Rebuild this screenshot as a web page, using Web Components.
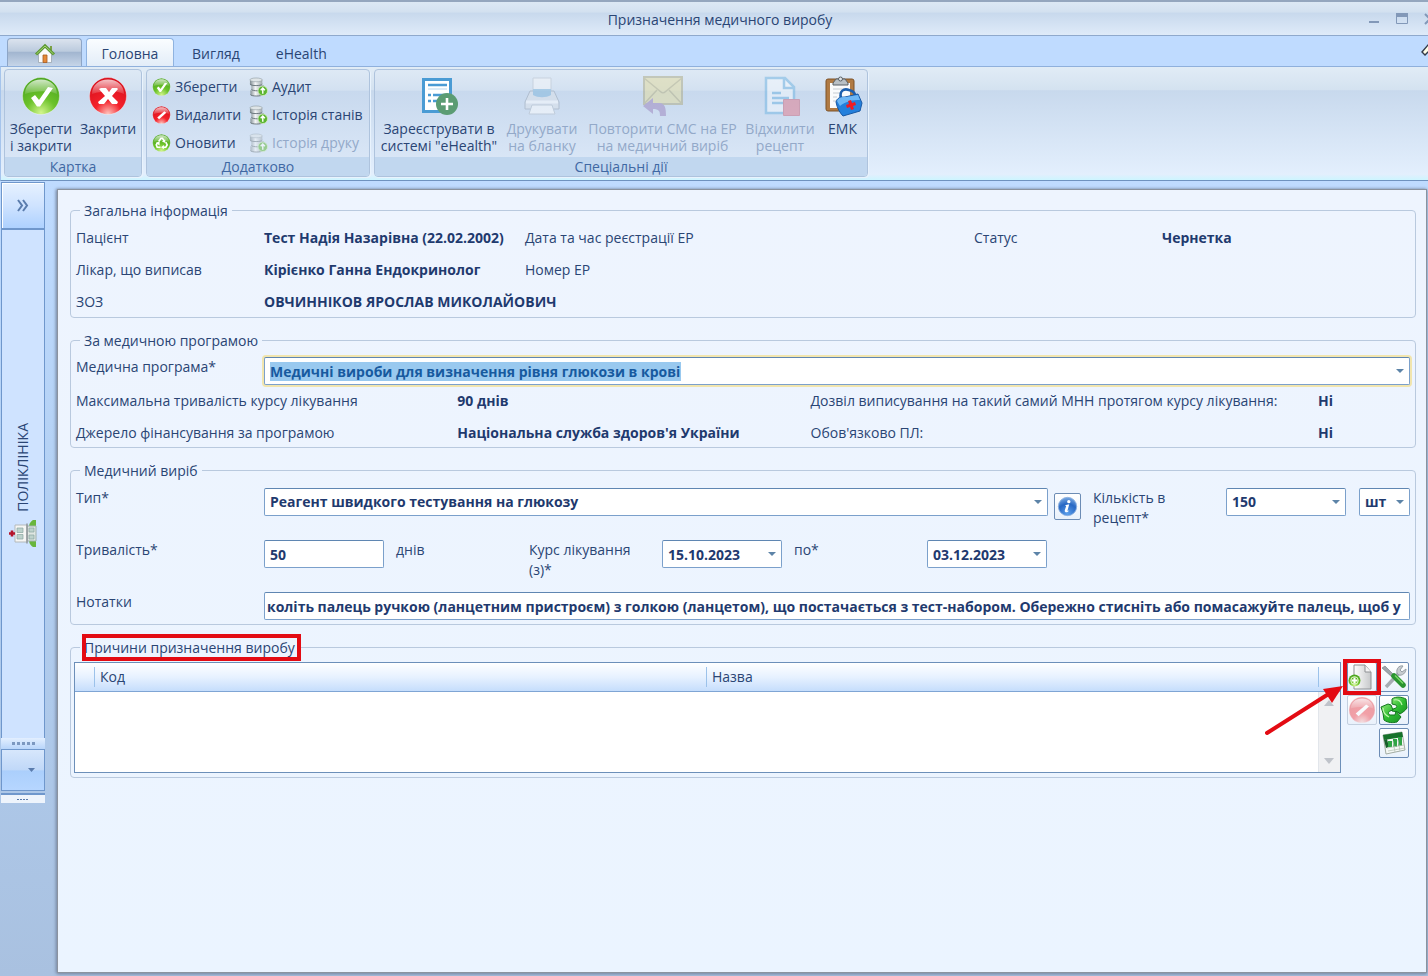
<!DOCTYPE html>
<html lang="uk">
<head>
<meta charset="utf-8">
<title>Призначення медичного виробу</title>
<style>
  html, body {
    margin: 0;
    height: 100%;
  }

  body {
    font-family: "Open Sans", "Noto Sans", sans-serif;
    font-size: 14px;
    line-height: 20px;
    color: #2a4574;
    --ink-strong: #1f3a6e;
    --line: #b9c9de;
    --field-line: #7ba0cb;
  }
</style>
</head>
<body>
<prescription-app></prescription-app>

<script>
const define = (name, html, setup) => {
  const template = document.createElement("template");
  template.innerHTML = html;

  customElements.define(name, class extends HTMLElement {
    connectedCallback() {
      if (this.shadowRoot) return;
      this.attachShadow({ mode: "open" });
      this.shadowRoot.appendChild(template.content.cloneNode(true));
      if (setup) setup(this, this.shadowRoot);
    }
  });
};

/* ---------- Icons ---------- */

const GREEN = `<radialGradient id="g" cx=".5" cy=".95" r=".9"><stop offset="0" stop-color="#d2f58c"/><stop offset=".45" stop-color="#6cc22a"/><stop offset="1" stop-color="#4aa51e"/></radialGradient>`;
const RED = `<radialGradient id="g" cx=".5" cy=".98" r=".9"><stop offset="0" stop-color="#ffc3bb"/><stop offset=".4" stop-color="#f4222b"/><stop offset="1" stop-color="#d80f1c"/></radialGradient>`;
const ball = (defs) => `<defs>${defs}<linearGradient id="s" x2="0" y2="1"><stop offset="0" stop-color="#fff" stop-opacity=".75"/><stop offset="1" stop-color="#fff" stop-opacity=".12"/></linearGradient></defs>
  <circle cx="20" cy="20" r="18.500" fill="url(#g)" stroke="#fff" stroke-opacity=".35"/>
  <path d="M4 18C4 9 11 3.500 20 3.500S36 9 36 18c-9-4-22-3-32 0z" fill="url(#s)"/>`;
const DATABASE = `<defs><linearGradient id="m"><stop offset="0" stop-color="#7c898f"/><stop offset=".4" stop-color="#f4f6f7"/><stop offset="1" stop-color="#8d999f"/></linearGradient></defs>
  <path d="M1 2.500v4c0 3 13 3 13 0v-4zM2.500 8v4c0 3 13 3 13 0V8zM1.500 13.500v4c0 3 13 3 13 0v-4z" fill="url(#m)"/>
  <ellipse cx="7.500" cy="2.500" rx="6.500" ry="2" fill="#dfe5e7" stroke="#8b979c" stroke-width=".6"/>
  <path d="M1 7c1 2 12 2 13 0M2.500 12.500c1 2 12 2 13 0M1.500 18c1 2 12 2 13 0" fill="none" stroke="#5c686e" stroke-width=".9"/>
  <circle cx="14.500" cy="14" r="5" fill="#5cb531" stroke="#d8f2c5" stroke-width=".8"/>
  <path d="M14.500 17v-5.500M12.300 13.500l2.200-2.400 2.200 2.400" fill="none" stroke="#fff" stroke-width="1.500"/>`;

const icons = {
  home: ["0 0 20 20", `<path d="M15 2h2v5h-2z" fill="#7aa046"/><path d="M3.500 10v8.500h13V10L10 3z" fill="#fafbfc" stroke="#9aa6b0" stroke-width=".8"/><path d="M8 11h4v7.500H8z" fill="#e58a3a" stroke="#a65a22" stroke-width=".8"/><path d="M1 10.500L10 1.800l9 8.700" fill="none" stroke="#5b9732" stroke-width="3"/><path d="M1.500 10L10 2l8.500 8" fill="none" stroke="#a6d572"/>`],
  ok: ["0 0 40 40", ball(GREEN) + `<path d="M10 22l4-3 4 5L27 11l5 1-13 18.500h-3z" fill="#fff"/>`],
  close: ["0 0 40 40", ball(RED) + `<path d="M11 13l2-1h5l3 4 3-4h5l1 1-6 7 6 6-1 2h-5l-4-5-4 5h-5l-1-2 7-6z" fill="#fff"/>`],
  forbid: ["0 0 40 40", ball(RED) + `<path d="M11 25L26 12l4 3-15 14z" fill="#fff"/>`],
  refresh: ["0 0 40 40", ball(GREEN) + `<g fill="none" stroke="#fff" stroke-width="3.500"><path d="M14 17l5-7h3l4 6M29 18l3 6-3 5h-6M18 29h-7l-2-5 3-5"/></g><path d="M28 12v8l-7-3zM25 24v9l-6-4zM8 20l8-3v8z" fill="#fff"/>`],
  database: ["0 0 20 20", DATABASE],
  register: ["0 0 40 40", `<path d="M4.500 3.500h27v32h-27z" fill="#fff" stroke="#4a9bd4" stroke-width="3"/><g stroke="#4a9bd4" stroke-width="2.500"><path d="M9 9h19M14 19h13M14 25h7"/><path d="M9 19h3M9 25h3"/></g><path d="M9 13h19" stroke="#b8d8ef" stroke-width="1"/><circle cx="28" cy="28" r="11" fill="#5b9c73"/><path d="M28 22v12M22 28h12" stroke="#fff" stroke-width="2.600"/>`],
  printer: ["0 0 40 40", `<path d="M11 2h18v17H11z" fill="#f5f7fa" stroke="#b9c2cc"/><path d="M8 15h24l5 11v7H3v-7z" fill="#dde2e9" stroke="#98a4b2"/><path d="M11 13h18v6c-5 3-13 3-18 0z" fill="#7fb6dc"/><path d="M4 26h32" stroke="#fff" stroke-width="3"/><path d="M10 29h20l3 9H7z" fill="#fff" stroke="#b3bdc8"/>`],
  mail: ["0 0 40 40", `<path d="M1 1h38v27H1z" fill="#e4dc9c" stroke="#aca982" stroke-width="2"/><path d="M1 2l17 14c1 1 3 1 4 0L39 2M1 28l13-14M39 28L26 14" fill="none" stroke="#b5ae78" stroke-width="1.500"/><path d="M0 30l10-8v5h6c6 0 7 5 7 13h-6c0-5-1-7-7-7v5z" fill="#9b83bd"/>`],
  reject: ["0 0 40 40", `<path d="M6 2h19l9 9v26H6z" fill="#f7fbff" stroke="#6fb4e2" stroke-width="2.500"/><path d="M24 2v10h10" fill="none" stroke="#6fb4e2" stroke-width="2.500"/><path d="M12 17h9M12 22h17M12 27h11" stroke="#6fb4e2" stroke-width="2.500"/><path d="M23.500 23.500h16v16h-16z" fill="#e0788b" stroke="#c96379"/>`],
  clipboard: ["0 0 40 40", `<rect x="3" y="3" width="28" height="32" rx="2" fill="#b07a43" stroke="#7d5228"/><path d="M7 7h20v25H7z" fill="#fafbfc"/><path d="M10 7l3-4h9l3 4v2H10z" fill="#b9c0c5" stroke="#596066"/><circle cx="17.500" cy="3" r="2" fill="#dfe3e6" stroke="#596066"/><path d="M10 13h14M10 17h8M10 21h4M10 25h3" stroke="#c6ccd2"/><path d="M18 22c-2-7 3-10 8-8 5 1 7 5 7 9" fill="none" stroke="#1c5fae" stroke-width="2.600"/><path d="M13 26c1-4 4-5 9-5l13-3 4 9-2 8-17 5c-3-3-6-8-7-14z" fill="#2480dc" stroke="#1858a4"/><path d="M14 25c2-4 5-4 9-4l12-2 2 5c-7 0-14 1-20 6z" fill="#6cb6f5"/><path d="M25 25l3-1 1 3 3-1 1 3-3 1 1 3-3 1-1-3-3 1-1-3 3-1z" fill="#ed1c24"/>`],
  hospital: ["0 0 28 28", `<path d="M27 0v27h-3c-3-2-5-5-3-9h2V9h-2c-2-4 0-7 3-9z" fill="#69b63d"/><path d="M18 6h9v15h-9z" fill="#dfe6e2" stroke="#9fb0ab"/><path d="M6 5h12v17H6z" fill="#f6f6f4" stroke="#b4b9ba"/><path d="M18 3.500v20" stroke="#8f969a" stroke-width="1.500"/><path d="M8 8h6v4.500H8zM8 14.500h6V19H8zM20 8h5v4h-5zM20 15h5v4h-5z" fill="#bdd2cc" stroke="#8aa8a1" stroke-width=".7"/><path d="M0 13.500h6M3 10.500v6" stroke="#b4142a" stroke-width="2.600"/>`],
  add: ["0 0 28 28", `<defs>${GREEN}<linearGradient id="p"><stop offset="0" stop-color="#fff"/><stop offset="1" stop-color="#c6c8ca"/></linearGradient></defs><path d="M6 2h11l6 7v17H6z" fill="url(#p)" stroke="#8e9194"/><path d="M17 2v7h6" fill="#f4f4f4" stroke="#8e9194"/><circle cx="6.500" cy="17.500" r="6" fill="url(#g)"/><circle cx="6.500" cy="17.500" r="3.800" fill="none" stroke="#e5f8cf"/><path d="M6.500 14.500v6M3.500 17.500h6" stroke="#fff" stroke-width="2"/>`],
  tools: ["0 0 28 28", `<path d="M6 24L20 9" stroke="#a6acb2" stroke-width="3.500"/><path d="M17 10c-1-4 2-8 6-7l-3 4 2 2 4-3c0 4-4 7-7 6z" fill="#c7ccd0" stroke="#969ea4"/><path d="M2 5l3-2 9 9-2 2z" fill="#9fa6ab" stroke="#737b80" stroke-width=".6"/><path d="M14 13l9 9" stroke="#2a9430" stroke-width="5.500" stroke-linecap="round"/><path d="M15 12.500l8 8" stroke="#7bd868" stroke-width="1.500"/>`],
  sync: ["0 0 28 28", `<defs><linearGradient id="a" x2="1" y2="1"><stop offset="0" stop-color="#8be672"/><stop offset=".5" stop-color="#2fbd32"/><stop offset="1" stop-color="#1b9427"/></linearGradient></defs>
    <path d="M12 3c4-3 10-2 14 0l1 9c-2 3-4 4-7 6l-2-2-6-1 1-2 3-1c1-1 1-2 0-3l-4-1z" fill="url(#a)" stroke="#14771e"/>
    <path d="M1 11l7-3 3 1 2 5-3 1c-2 1-2 3 0 4l5 0 1-4 5 6-4 5c-4 1-9 1-13-2l-1-7z" fill="url(#a)" stroke="#14771e"/>
    <path d="M14 4c4-1 7 1 8 5M3 12c0 4 2 7 6 9" fill="none" stroke="#c1f6b0" stroke-width="1.200"/>`],
  sheet: ["0 0 28 28", `<path d="M3 6l19-3 3 18-19 4z" fill="#f5f8f5" stroke="#a3ada4"/><path d="M3 6l19-3 1 5-19 3z" fill="#17722b"/><path d="M4 11l3-1 2 8-3 1z" fill="#175f29"/><path d="M8 12h4v6H8zM13 10h4v8h-4zM18 8h4v9h-4z" fill="#2fa544"/><path d="M7 19l17-3M8 22l17-3M13 12l2 11M18 11l2 11" stroke="#b7c4b8" stroke-width=".8"/>`],
  info: ["0 0 24 24", `<defs><radialGradient id="g" cx=".5" cy=".9" r=".9"><stop offset="0" stop-color="#5ca0ec"/><stop offset=".6" stop-color="#2767c4"/><stop offset="1" stop-color="#79a9e2"/></radialGradient></defs><circle cx="12" cy="12" r="10.500" fill="url(#g)" stroke="#8bb0e0"/><circle cx="13.500" cy="6.500" r="1.900" fill="#fff"/><path d="M9 10.500l5-1-2 7c0 1 1 .5 2-.5-1 3-6 4-5 0l1.500-4.500z" fill="#fff"/>`],
  hint: ["0 0 20 20", `<path d="M2 9l6-7 6 7-3 3-3-3-3 3z" fill="#fffde6" stroke="#333a48" stroke-width="1.400"/>`]
};

define("ui-icon", `
  <style>
    :host { display: block; width: 20px; height: 20px; flex: none; }
    svg { display: block; width: 100%; height: 100%; overflow: visible; }
  </style>
`, (host, root) => {
  const [box, body] = icons[host.getAttribute("name")];
  root.innerHTML += `<svg viewBox="${box}" aria-hidden="true">${body}</svg>`;
});

/* ---------- Window title ---------- */

define("title-bar", `
  <style>
    :host {
      display: grid;
      grid-template-columns: 1fr auto 1fr;
      align-items: center;
      height: 36px;
      box-sizing: border-box;
      overflow: hidden;
      border-top: 2px solid #94a6be;
      border-bottom: 1px solid #8fa9cc;
      background: linear-gradient(#dce8f4, #d3e1f0 30%, #c8d9ed 34%, #dfebf9);
    }
    h1 { margin: 2px 0 0 12px; font-size: 14px; font-weight: 400; grid-column: 2; }
    div { display: flex; justify-content: flex-end; gap: 16px; margin-right: -8px; }
    button { border: 0; padding: 0; background: none; width: 12px; height: 12px; color: #8298b8; }
    svg { display: block; }
  </style>
  <h1><slot></slot></h1>
  <div>
    <button aria-label="Згорнути"><svg width="12" height="12"><path d="M1 9h10" stroke="currentColor" stroke-width="2"/></svg></button>
    <button aria-label="Розгорнути"><svg width="12" height="12"><path d="M.5 1v9.500h11V1" fill="none" stroke="currentColor"/><path d="M0 0h12v4H0z" fill="currentColor"/></svg></button>
    <button aria-label="Закрити вікно"><svg width="12" height="12"><path d="M1 1l10 10M11 1L1 11" stroke="currentColor" stroke-width="2"/></svg></button>
  </div>
`);

/* ---------- Ribbon ---------- */

define("ribbon-tabs", `
  <style>
    :host {
      display: flex;
      align-items: flex-end;
      height: 30px;
      padding: 0 0 0 7px;
      overflow: hidden;
      background: #bfdbff;
    }
    button { font: inherit; color: inherit; border: 0; background: none; padding: 2px 0 0; height: 28px; box-sizing: border-box; }
    .home {
      width: 75px;
      display: flex;
      justify-content: center;
      align-items: center;
      border: 1px solid #8da5c6;
      border-bottom: 0;
      border-radius: 4px 4px 0 0;
      background: linear-gradient(#dbe3ee, #bccbde 45%, #a2b6d0 50%, #c6d5e8);
    }
    .active {
      width: 88px;
      margin-left: 4px;
      border: 1px solid #8fb3e0;
      border-bottom: 0;
      border-radius: 4px 4px 0 0;
      background: linear-gradient(#fafdff, #e3edf8);
    }
    .plain { padding: 3px 18px 0; }
    .hint { margin: 0 -12px 0 auto; width: 20px; }
  </style>
  <button class="home" aria-label="Домашня"><ui-icon name="home"></ui-icon></button>
  <button class="active">Головна</button>
  <button class="plain">Вигляд</button>
  <button class="plain">eHealth</button>
  <button class="hint" aria-label="Згорнути стрічку"><ui-icon name="hint"></ui-icon></button>
`);

define("ribbon-group", `
  <style>
    :host {
      display: flex;
      flex-direction: column;
      box-sizing: border-box;
      border: 1px solid #aec3dd;
      border-radius: 4px;
      overflow: hidden;
      background: linear-gradient(#dee9f5, #d3e1f1 19%, #c8d9ee 20%, #dde9f8);
      box-shadow: 1px 1px 0 #e9f3fd;
    }
    .items { flex: 1; display: flex; padding: 6px 5px 0; }
    footer {
      height: 19px;
      line-height: 19px;
      text-align: center;
      color: #3f68a3;
      background: #c1d7ef;
    }
  </style>
  <div class="items"><slot></slot></div>
  <footer></footer>
`, (host, root) => {
  root.querySelector("footer").textContent = host.getAttribute("label");
});

define("ribbon-button", `
  <style>
    :host { display: block; flex: none; }
    button {
      font: inherit;
      color: inherit;
      border: 0;
      padding: 0;
      background: none;
      display: flex;
      flex-direction: column;
      align-items: center;
      width: 100%;
      gap: 4px;
      line-height: 17px;
      white-space: nowrap;
    }
    ui-icon { width: 40px; height: 40px; }
    :host([small]) button { flex-direction: row; line-height: 20px; }
    :host([small]) ui-icon { width: 19px; height: 20px; }
    button:disabled { color: #93a9c9; }
    button:disabled ui-icon { opacity: .5; }
  </style>
  <button><span><slot></slot></span></button>
`, (host, root) => {
  const button = root.querySelector("button");
  const icon = document.createElement("ui-icon");
  icon.setAttribute("name", host.getAttribute("icon"));
  button.prepend(icon);
  button.disabled = host.hasAttribute("disabled");
});

define("main-ribbon", `
  <style>
    :host {
      display: flex;
      gap: 4px;
      height: 115px;
      box-sizing: border-box;
      padding: 2px 3px 3px;
      border-top: 1px solid #8fb0dc;
      border-bottom: 1px solid #6f92bf;
      border-left: 1px solid #a5c4ec;
      background: linear-gradient(#e1ecf6, #d4e2f0 20%, #c8d9ed 21%, #e3effd 95%, #cdf5ff);
    }
    .card { width: 138px; }
    .extra { width: 224px; }
    .special { width: 494px; }
    .stack { display: flex; flex-direction: column; gap: 8px; padding-top: 1px; }
    .save { width: 62px; }
    .quit { width: 72px; }
    .c1 { width: 97px; }
    .a { width: 118px; }
    .b { width: 88px; }
    .c { width: 153px; }
    .d { width: 82px; }
    .e { width: 43px; }
  </style>
  <ribbon-group class="card" label="Картка">
    <ribbon-button class="save" icon="ok">Зберегти<br>і закрити</ribbon-button>
    <ribbon-button class="quit" icon="close">Закрити</ribbon-button>
  </ribbon-group>
  <ribbon-group class="extra" label="Додатково">
    <div class="stack c1">
      <ribbon-button small icon="ok">Зберегти</ribbon-button>
      <ribbon-button small icon="forbid">Видалити</ribbon-button>
      <ribbon-button small icon="refresh">Оновити</ribbon-button>
    </div>
    <div class="stack">
      <ribbon-button small icon="database">Аудит</ribbon-button>
      <ribbon-button small icon="database">Історія станів</ribbon-button>
      <ribbon-button small icon="database" disabled>Історія друку</ribbon-button>
    </div>
  </ribbon-group>
  <ribbon-group class="special" label="Спеціальні дії">
    <ribbon-button class="a" icon="register">Зареєструвати в<br>системі "eHealth"</ribbon-button>
    <ribbon-button class="b" icon="printer" disabled>Друкувати<br>на бланку</ribbon-button>
    <ribbon-button class="c" icon="mail" disabled>Повторити СМС на ЕР<br>на медичний виріб</ribbon-button>
    <ribbon-button class="d" icon="reject" disabled>Відхилити<br>рецепт</ribbon-button>
    <ribbon-button class="e" icon="clipboard">ЕМК</ribbon-button>
  </ribbon-group>
`);

/* ---------- Collapsed navigation pane ---------- */

define("side-pane", `
  <style>
    :host { display: flex; flex-direction: column; width: 44px; margin-left: 1px; flex: none; }
    button { font: inherit; color: #5a7cad; border: 1px solid #6f97cc; padding: 0; }
    .expand {
      height: 48px;
      display: grid;
      place-items: center;
      box-shadow: inset 1px 1px 0 #fff;
      border-bottom-width: 2px;
      background: linear-gradient(#e6f1ff, #cfe3ff 50%, #add1ff);
    }
    .body {
      height: 508px;
      display: flex;
      flex-direction: column;
      align-items: center;
      justify-content: flex-end;
      gap: 8px;
      box-sizing: border-box;
      padding-bottom: 190px;
      border: solid #6f97cc;
      border-width: 0 1px;
      background: #cfe3ff;
    }
    .name { writing-mode: vertical-rl; transform: rotate(180deg); }
    .body ui-icon { width: 28px; height: 28px; }
    .grip {
      height: 11px;
      display: grid;
      place-items: center;
      background: linear-gradient(#e3efff, #b8d5fa);
    }
    .more {
      height: 42px;
      display: flex;
      align-items: center;
      justify-content: flex-end;
      padding-right: 9px;
      background: linear-gradient(#d7e7fc, #c0d8f8 50%, #abcffc 52%, #b6d6ff);
    }
    .foot {
      height: 8px;
      margin-top: 2px;
      border-top: 2px solid #6f97cc;
      display: grid;
      place-items: center;
      background: #eef4fc;
    }
    svg { display: block; }
  </style>
  <button class="expand" aria-label="Розгорнути панель"><svg width="12" height="13"><path d="M1 1l4 5.500L1 12M6 1l4 5.500L6 12" fill="none" stroke="currentColor" stroke-width="2"/></svg></button>
  <div class="body"><span class="name">ПОЛІКЛІНІКА</span><ui-icon name="hospital"></ui-icon></div>
  <div class="grip"><svg width="24" height="3"><path d="M1 1.500h23" stroke="#7c98c0" stroke-width="3" stroke-dasharray="3 2"/></svg></div>
  <button class="more" aria-label="Інші розділи"><svg width="7" height="4"><path d="M0 0h7L3.500 4z" fill="#5a7cad"/></svg></button>
  <div class="foot"><svg width="12" height="1"><path d="M0 .5h12" stroke="#5a7cad" stroke-dasharray="2 1"/></svg></div>
`);

/* ---------- Form parts ---------- */

define("form-group", `
  <style>
    :host { display: block; }
    fieldset {
      margin: 0;
      min-width: 0;
      padding: 0 5px 4px;
      border: 1px solid var(--line);
      border-radius: 4px;
    }
    legend { padding: 0 4px; margin-left: 4px; height: 20px; line-height: 22px; position: relative; }
    :host([marked]) legend::after {
      content: "";
      position: absolute;
      inset: -3px -2px -4px 2px;
      border: 4px solid #e30b13;
    }
  </style>
  <fieldset><legend></legend><slot></slot></fieldset>
`, (host, root) => {
  root.querySelector("legend").textContent = host.getAttribute("label");
});

/* Label with a text box or a drop-down next to it */
define("form-field", `
  <style>
    :host { display: flex; align-items: flex-start; --label: 188px; }
    :host([second]) { --label: 133px; }
    label { width: var(--label); flex: none; }
    label span { display: block; }
    :host([second]) label span { width: 120px; }
    .box {
      flex: 1;
      min-width: 0;
      height: 28px;
      box-sizing: border-box;
      display: flex;
      align-items: center;
      border: 1px solid var(--field-line);
      border-top-color: #5f86b2;
      border-radius: 2px;
      background: #fff;
    }
    input, select {
      flex: 1;
      min-width: 0;
      appearance: none;
      border: 0;
      outline: 0;
      margin: 0;
      padding: 0 0 0 5px;
      background: none;
      font: inherit;
      font-weight: 700;
      color: var(--ink-strong);
      height: 22px;
    }
    :host([tight]) input { padding: 0 0 0 2px; }
    svg { flex: none; margin-right: 5px; pointer-events: none; }
    :host([current]) .box { box-shadow: 0 0 0 2px #f1e5ae; }
    :host([current]) select {
      flex: none;
      margin: 1px auto 0 5px;
      padding: 0;
      height: 19px;
      line-height: 19px;
      background: #99c9ef;
      color: #175a9f;
    }
  </style>
  <label for="control"><span></span></label>
  <div class="box"></div>
`, (host, root) => {
  const label = host.getAttribute("label");
  const value = host.getAttribute("value");
  const control = document.createElement(host.hasAttribute("list") ? "select" : "input");

  if (label) root.querySelector("label span").textContent = label;
  else {
    root.querySelector("label").remove();
    control.setAttribute("aria-label", host.getAttribute("hint"));
  }

  control.id = "control";
  if (control.tagName === "SELECT") control.add(new Option(value));
  else control.value = value;

  const box = root.querySelector(".box");
  box.append(control);
  if (host.hasAttribute("list") || host.hasAttribute("date")) {
    box.insertAdjacentHTML("beforeend", `<svg width="8" height="4"><path d="M0 0h8L4 4z" fill="#5d84a8"/></svg>`);
  }
});

define("tool-button", `
  <style>
    :host { display: block; }
    button {
      display: grid;
      place-items: center;
      width: 30px;
      height: 30px;
      padding: 0;
      border: 1px solid #6c8cb5;
      border-radius: 2px;
      background: linear-gradient(#fff, #e9f1fb);
    }
    ui-icon { width: 28px; height: 28px; }
    :host([compact]) button { width: 27px; height: 27px; }
    :host([compact]) ui-icon { width: 21px; height: 21px; }
    button:disabled { border-color: #c3cfdf; }
    button:disabled ui-icon { opacity: .4; }
  </style>
  <button></button>
`, (host, root) => {
  const button = root.querySelector("button");
  button.innerHTML = `<ui-icon name="${host.getAttribute("icon")}"></ui-icon>`;
  button.setAttribute("aria-label", host.getAttribute("label"));
  button.disabled = host.hasAttribute("disabled");
});

define("reason-grid", `
  <style>
    :host {
      display: flex;
      flex-direction: column;
      height: 111px;
      box-sizing: border-box;
      border: 1px solid #6c8fb9;
      background: #fff;
    }
    table { width: 100%; table-layout: fixed; border-collapse: collapse; }
    tr { background: linear-gradient(#fff, #e6f1ff 50%, #c3dcfc); }
    th { height: 28px; padding: 0 6px; text-align: left; font-weight: 400; border-bottom: 1px solid #7fa5d4; }
    th + th { background: linear-gradient(#9cc2ea, #9cc2ea) 0 4px / 1px 20px no-repeat; }
    th:first-child { width: 7px; }
    th:last-child { width: 10px; }
    .body { flex: 1; display: flex; justify-content: flex-end; }
    .scroll {
      width: 22px;
      display: flex;
      flex-direction: column;
      justify-content: space-between;
      align-items: center;
      box-sizing: border-box;
      padding: 8px 1px 8px 0;
      background: #f0f1f3;
      border-left: 1px solid #e2e6eb;
    }
  </style>
  <table>
    <thead><tr><th></th><th>Код</th><th>Назва</th><th></th></tr></thead>
  </table>
  <div class="body">
    <div class="scroll">
      <svg width="10" height="6"><path d="M0 6h10L5 0z" fill="#bfc3ca"/></svg>
      <svg width="10" height="6"><path d="M0 0h10L5 6z" fill="#bfc3ca"/></svg>
    </div>
  </div>
`);

/* Red frame and arrow drawn over the button in the slot */
define("callout-mark", `
  <style>
    :host { display: block; position: relative; }
    .frame {
      position: absolute;
      inset: -3px -4px -3px -4px;
      border: 4px solid #e30b13;
      pointer-events: none;
    }
    svg { position: absolute; right: 32px; top: 20px; pointer-events: none; }
  </style>
  <slot></slot>
  <div class="frame"></div>
  <svg width="80" height="54"><path d="M2 51L62 13" stroke="#e30b13" stroke-width="4" stroke-linecap="round"/><path d="M78 4L58 7l9 14z" fill="#e30b13"/></svg>
`);

/* ---------- Card form ---------- */

define("prescription-form", `
  <style>
    :host {
      display: flex;
      flex-direction: column;
      gap: 12px;
      box-sizing: border-box;
      padding: 10px 10px 11px 12px;
      border: 1px solid #8b939f;
      box-shadow: -1px 0 3px #7d8ea8, 0 1px 3px #7d8ea8;
      background: linear-gradient(#eef4fe, #ebf4ff);
    }
    b { color: var(--ink-strong); }
    .general { display: grid; grid-template-columns: 188px 261px 1fr 188px 248px; row-gap: 12px; padding: 8px 0 1px; }
    .program { padding: 7px 0 0; }
    .facts { display: grid; grid-template-columns: 381fr 353fr 507fr 92fr; row-gap: 12px; padding-top: 6px; }
    .item { padding: 8px 0 0; display: flex; flex-direction: column; gap: 12px; }
    .row { display: flex; align-items: flex-start; height: 40px; }
    .grow { flex: 1; }
    .info { margin: 5px 12px 0 6px; }
    .amount { width: 253px; margin-right: 13px; }
    .unit { width: 51px; }
    .term { width: 308px; }
    .days { width: 133px; padding-left: 12px; }
    .date { width: 253px; margin-right: 12px; }
    .reasons { display: flex; gap: 6px; margin: 5px -2px 0; }
    .tools { display: grid; grid-template-columns: 30px 30px; gap: 3px 2px; align-content: start; margin-right: 3px; }
    .last { grid-column: 2; }
  </style>
  <form-group label="Загальна інформація">
    <div class="general">
      <span>Пацієнт</span><b>Тест Надія Назарівна (22.02.2002)</b><span>Дата та час реєстрації ЕР</span><span>Статус</span><b>Чернетка</b>
      <span>Лікар, що виписав</span><b>Кірієнко Ганна Ендокринолог</b><span>Номер ЕР</span><span></span><span></span>
      <span>ЗОЗ</span><b style="grid-column: span 2">ОВЧИННІКОВ ЯРОСЛАВ МИКОЛАЙОВИЧ</b>
    </div>
  </form-group>

  <form-group label="За медичною програмою">
    <div class="program">
      <form-field current list label="Медична програма*" value="Медичні вироби для визначення рівня глюкози в крові"></form-field>
      <div class="facts">
        <span>Максимальна тривалість курсу лікування</span><b>90 днів</b><span>Дозвіл виписування на такий самий МНН протягом курсу лікування:</span><b>Ні</b>
        <span>Джерело фінансування за програмою</span><b>Національна служба здоров'я України</b><span>Обов'язково ПЛ:</span><b>Ні</b>
      </div>
    </div>
  </form-group>

  <form-group label="Медичний виріб">
    <div class="item">
      <div class="row">
        <form-field class="grow" list label="Тип*" value="Реагент швидкого тестування на глюкозу"></form-field>
        <tool-button class="info" compact icon="info" label="Довідка"></tool-button>
        <form-field class="amount" second list label="Кількість в рецепт*" value="150"></form-field>
        <form-field class="unit" list hint="Одиниця" value="шт"></form-field>
      </div>
      <div class="row">
        <form-field class="term" label="Тривалість*" value="50"></form-field>
        <span class="days">днів</span>
        <form-field class="date" second date label="Курс лікування (з)*" value="15.10.2023"></form-field>
        <form-field class="date" second date label="по*" value="03.12.2023"></form-field>
      </div>
      <form-field tight label="Нотатки" value="коліть палець ручкою (ланцетним пристроєм) з голкою (ланцетом), що постачається з тест-набором. Обережно стисніть або помасажуйте палець, щоб у"></form-field>
    </div>
  </form-group>

  <form-group marked label="Причини призначення виробу">
    <div class="reasons">
      <reason-grid class="grow"></reason-grid>
      <div class="tools">
        <callout-mark><tool-button icon="add" label="Додати"></tool-button></callout-mark>
        <tool-button icon="tools" label="Змінити"></tool-button>
        <tool-button icon="forbid" disabled label="Видалити"></tool-button>
        <tool-button icon="sync" label="Оновити"></tool-button>
        <tool-button class="last" icon="sheet" label="Експорт"></tool-button>
      </div>
    </div>
  </form-group>
`);

define("prescription-app", `
  <style>
    :host {
      display: flex;
      flex-direction: column;
      min-height: 100vh;
      overflow: hidden;
      background: #a9c1e0;
    }
    main {
      flex: 1;
      display: flex;
      gap: 12px;
      padding: 1px 0 3px;
      background: linear-gradient(#bfdbff, #b3d0f3 40%, #a9c1e0);
    }
    prescription-form { flex: 1; min-width: 0; margin: 7px 1px 0 0; }
  </style>
  <title-bar>Призначення медичного виробу</title-bar>
  <ribbon-tabs></ribbon-tabs>
  <main-ribbon></main-ribbon>
  <main>
    <side-pane></side-pane>
    <prescription-form></prescription-form>
  </main>
`);
</script>
</body>
</html>
